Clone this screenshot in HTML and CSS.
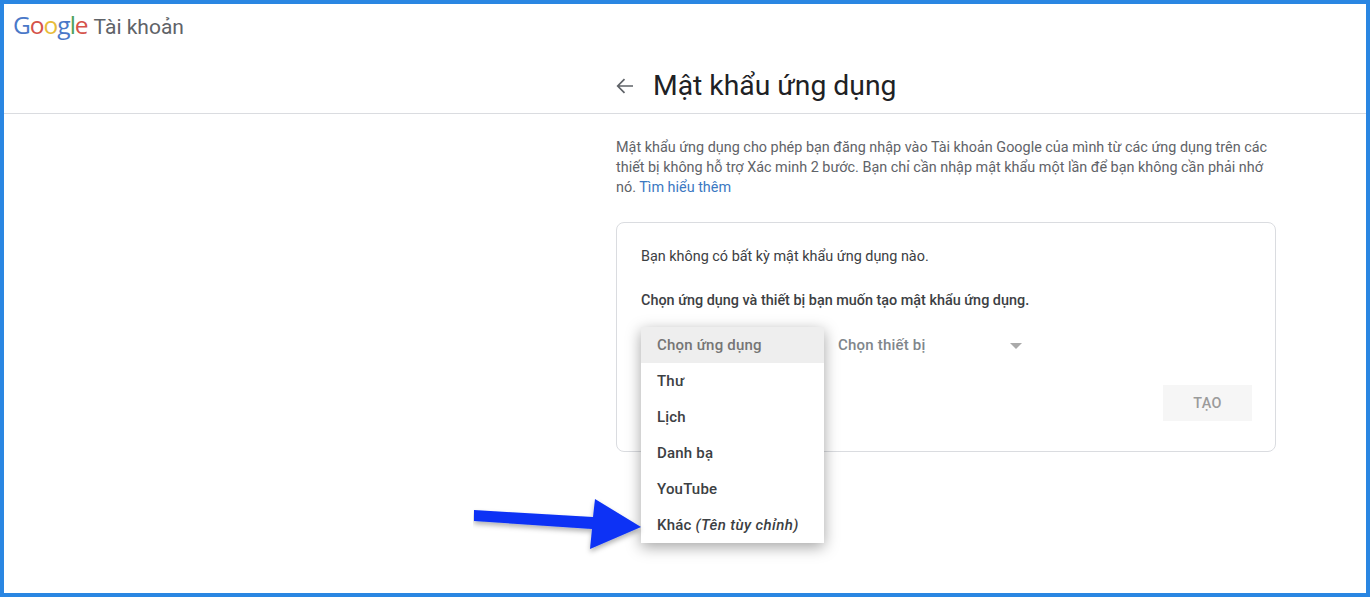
FILE: index.html
```html
<!DOCTYPE html>
<html lang="vi">
<head>
<meta charset="utf-8">
<title>Mật khẩu ứng dụng</title>
<link rel="stylesheet" href="styles.css">
</head>
<body>
<div class="frame">
  <header class="topbar">
    <div class="brand">
      <span class="logo"><span class="g-blue">G</span><span class="g-red">o</span><span class="g-yellow">o</span><span class="g-blue">g</span><span class="g-green">l</span><span class="g-red">e</span></span>
      <span class="product">Tài khoản</span>
    </div>
    <div class="title-row">
      <svg class="back" width="18" height="16" viewBox="0 0 18 16"><path d="M17 8H2M8.5 1.2 1.7 8l6.8 6.8" fill="none" stroke="#5f6368" stroke-width="1.7"/></svg>
      <h1 class="title">Mật khẩu ứng dụng</h1>
    </div>
  </header>
  <main class="content">
    <p class="intro">Mật khẩu ứng dụng cho phép bạn đăng nhập vào Tài khoản Google của mình từ các ứng dụng trên các thiết bị không hỗ trợ Xác minh 2 bước. Bạn chỉ cần nhập mật khẩu một lần để bạn không cần phải nhớ nó. <a class="link" href="#">Tìm hiểu thêm</a></p>
    <section class="card">
      <p class="empty">Bạn không có bất kỳ mật khẩu ứng dụng nào.</p>
      <p class="prompt">Chọn ứng dụng và thiết bị bạn muốn tạo mật khẩu ứng dụng.</p>
      <div class="selectors">
        <div class="select-app">
          <ul class="menu">
            <li class="item item-active">Chọn ứng dụng</li>
            <li class="item">Thư</li>
            <li class="item">Lịch</li>
            <li class="item">Danh bạ</li>
            <li class="item">YouTube</li>
            <li class="item">Khác <em class="custom">(Tên tùy chỉnh)</em></li>
          </ul>
        </div>
        <div class="select-device">
          <span>Chọn thiết bị</span>
          <span class="caret"></span>
        </div>
      </div>
      <div class="actions"><button class="create" type="button">TẠO</button></div>
    </section>
  </main>
  <svg class="arrow" width="180" height="60" viewBox="0 0 180 60">
    <defs><filter id="sh" x="-10%" y="-20%" width="120%" height="150%"><feDropShadow dx="0" dy="3" stdDeviation="2.5" flood-color="#000" flood-opacity=".3"/></filter></defs>
    <path d="M1 11 120 18 122 0 168 28 117 50 119 30 1 22Z" fill="#0a32f5" filter="url(#sh)"/>
  </svg>
</div>
</body>
</html>
```
FILE: styles.css
```css
* { box-sizing: border-box; }
html, body { margin: 0; height: 100%; }
body { font-family: Roboto, "Liberation Sans", sans-serif; background: #fff; overflow: hidden; }
.frame {
  position: relative;
  width: 1370px;
  height: 597px;
  border: 4px solid #2a86e2;
  background: #fff;
  overflow: hidden;
}
.topbar {
  height: 110px;
  border-bottom: 1px solid #dadce0;
  display: flex;
  flex-direction: column;
}
.brand {
  display: flex;
  align-items: baseline;
  gap: 6px;
  padding: 6px 0 0 9px;
  height: 38px;
}
.logo { font-family: "Open Sans", sans-serif; font-size: 24.5px; letter-spacing: -1px; line-height: 30px; }
.g-blue { color: #4a78c8; }
.g-red { color: #d5524a; }
.g-yellow { color: #e8bb3a; }
.g-green { color: #4ca25a; }
.product { font-size: 21px; color: #5f6368; line-height: 30px; }
.title-row {
  display: flex;
  align-items: center;
  margin-left: 612px;
  margin-top: 26px;
  gap: 19px;
}
.back { flex: none; margin-top: 0; }
.title { margin: 0; font-weight: 400; font-size: 28.3px; line-height: 36px; color: #202124; }
.content { margin-left: 612px; width: 660px; padding-top: 24px; }
.intro { margin: 0; font-size: 14.4px; line-height: 20px; color: #5f6368; width: 656px; }
.link { color: #3b78c2; text-decoration: none; }
.card {
  margin-top: 24px;
  height: 230px;
  border: 1px solid #dadce0;
  border-radius: 8px;
  padding: 24px 24px 0;
  position: relative;
}
.empty { margin: 0; font-size: 14.4px; line-height: 20px; color: #3c4043; }
.prompt { margin: 24px 0 0; font-size: 14.4px; line-height: 20px; font-weight: 500; color: #3c4043; }
.selectors { display: flex; margin-top: 16px; height: 36px; }
.select-app { width: 183px; position: relative; flex: none; }
.menu {
  position: absolute;
  left: 0;
  top: 0;
  width: 183px;
  margin: 0;
  padding: 0;
  list-style: none;
  background: #fff;
  box-shadow: 0 4px 14px rgba(0,0,0,.36);
  z-index: 2;
}
.item {
  height: 36px;
  line-height: 36px;
  padding-left: 16px;
  font-size: 15px;
  font-weight: 500;
  color: #3c4043;
  letter-spacing: .2px;
}
.item-active { background: #eeeeee; color: #757575; }
.custom { font-weight: 500; letter-spacing: .4px; }
.select-device {
  width: 186px;
  margin-left: 14px;
  display: flex;
  align-items: center;
  justify-content: space-between;
  font-size: 15px;
  font-weight: 500;
  color: #80868b;
  letter-spacing: .2px;
  padding-right: 2px;
}
.caret { width: 0; height: 0; border-left: 6px solid transparent; border-right: 6px solid transparent; border-top: 6px solid #aaaaaa; margin-top: 1px; }
.actions { display: flex; justify-content: flex-end; margin-top: 22px; margin-right: -1px; }
.create {
  width: 89px;
  height: 36px;
  border: 0;
  background: #f6f6f6;
  font-family: inherit;
  font-size: 14.4px;
  font-weight: 500;
  color: #9b9b9b;
  letter-spacing: .4px;
}
.arrow { position: absolute; left: 469px; top: 495px; z-index: 3; }
```
